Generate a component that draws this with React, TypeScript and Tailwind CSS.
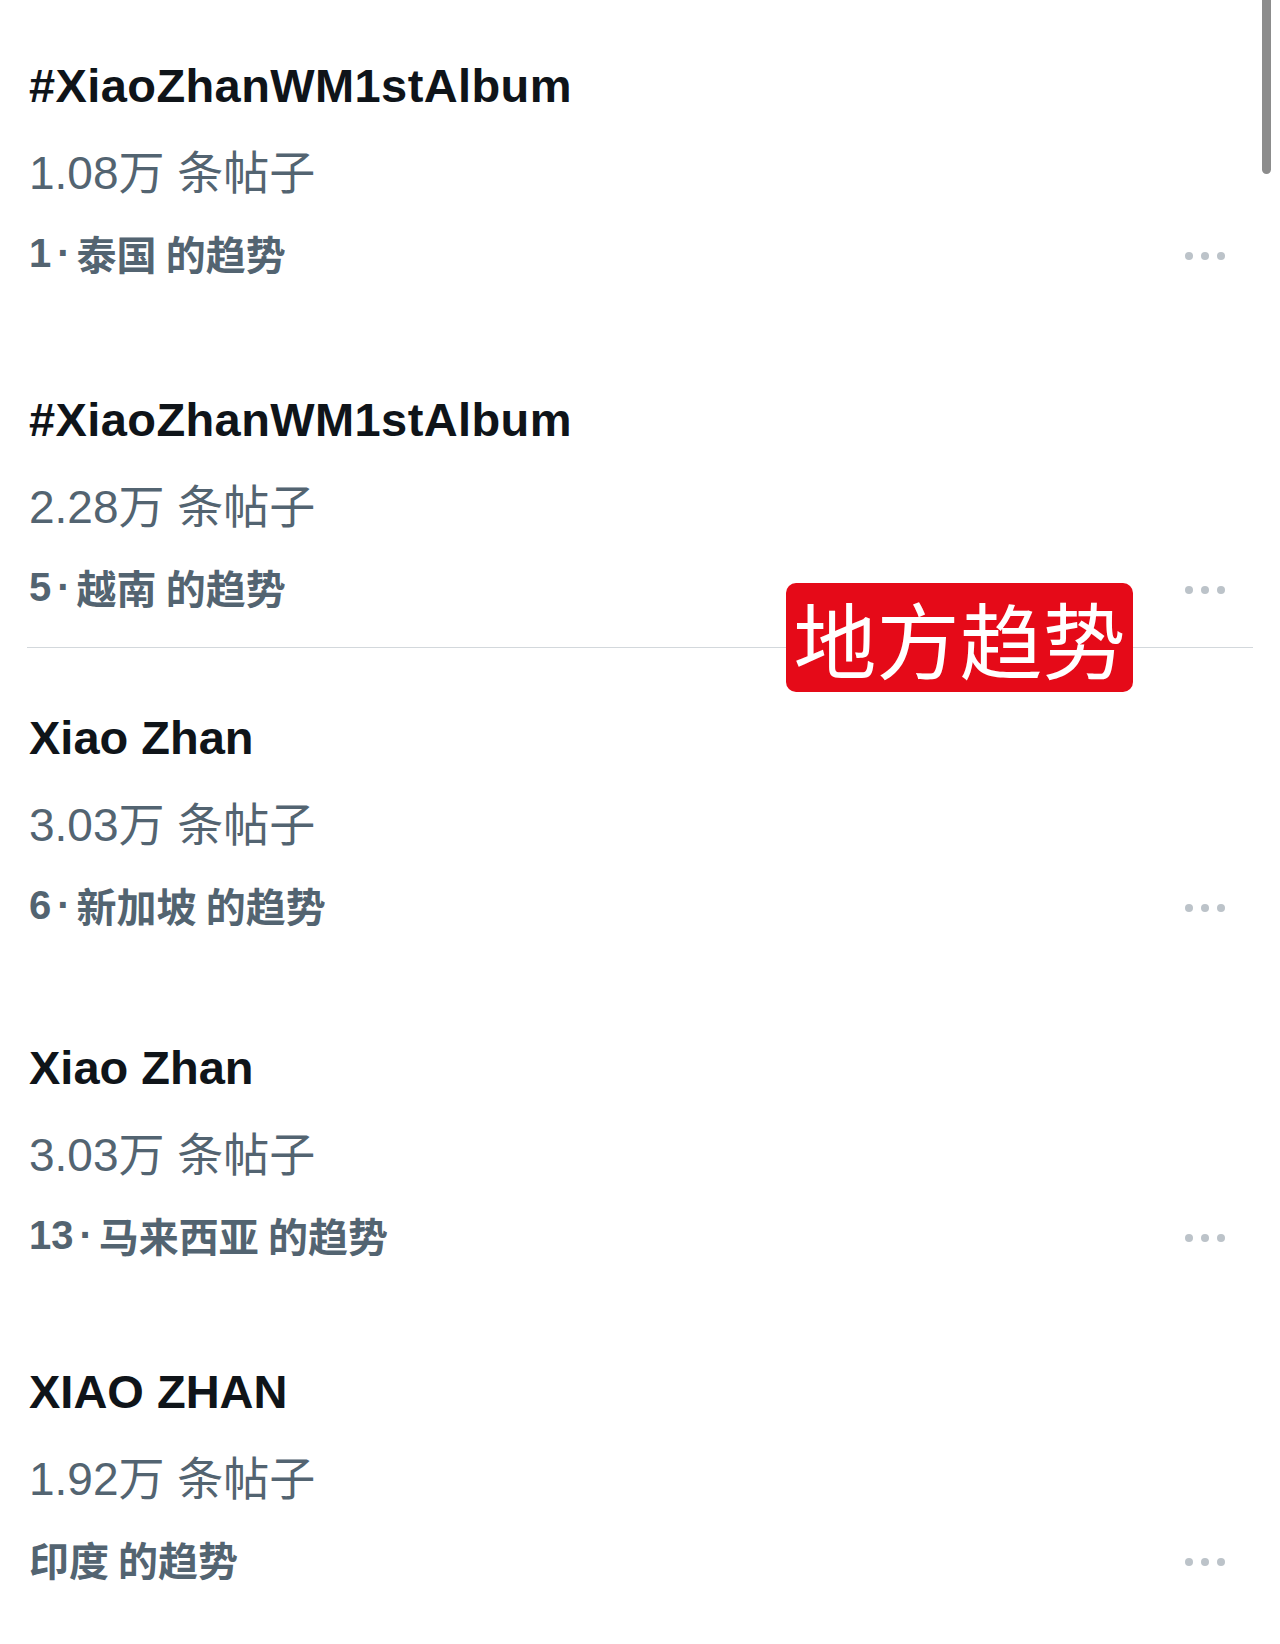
import React from "react";

interface Trend {
  title: string;
  count: string;
  rank?: string;
  place: string;
  gap: string;
}

const trends: Trend[] = [
  { title: "#XiaoZhanWM1stAlbum", count: "1.08万 条帖子", rank: "1", place: "泰国 的趋势", gap: "mt-[44px]" },
  { title: "#XiaoZhanWM1stAlbum", count: "2.28万 条帖子", rank: "5", place: "越南 的趋势", gap: "mt-[84px]" },
  { title: "Xiao Zhan", count: "3.03万 条帖子", rank: "6", place: "新加坡 的趋势", gap: "mt-[48px]" },
  { title: "Xiao Zhan", count: "3.03万 条帖子", rank: "13", place: "马来西亚 的趋势", gap: "mt-[80px]" },
  { title: "XIAO ZHAN", count: "1.92万 条帖子", place: "印度 的趋势", gap: "mt-[74px]" },
];

function MoreDots() {
  return (
    <div className="mt-[5px] flex items-center gap-[8px]">
      <span className="h-[8px] w-[8px] rounded-full bg-[#bcc3c9]" />
      <span className="h-[8px] w-[8px] rounded-full bg-[#bcc3c9]" />
      <span className="h-[8px] w-[8px] rounded-full bg-[#bcc3c9]" />
    </div>
  );
}

function TrendItem({ trend }: { trend: Trend }) {
  const isTag = trend.title.startsWith("#");
  return (
    <div className={`${trend.gap} pl-[29px] pr-[55px]`}>
      <div
        className={`h-[84px] leading-[84px] text-[47px] font-bold text-[#0f1419] font-['Liberation_Sans','Noto_Sans_CJK_SC',sans-serif] whitespace-nowrap ${
          isTag ? "tracking-[0.4px]" : ""
        }`}
      >
        {trend.title}
      </div>
      <div className="h-[84px] pt-[6px] leading-[78px] text-[46px] font-normal text-[#536471] font-['Liberation_Sans','Noto_Sans_CJK_SC',sans-serif] whitespace-nowrap">
        {trend.count}
      </div>
      <div className="flex h-[82px] items-center justify-between">
        <span className="flex items-center text-[40px] font-bold leading-[82px] text-[#536471] whitespace-nowrap">
          {trend.rank && (
            <span className="font-['Liberation_Sans',sans-serif]">
              {trend.rank}
              <span className="mx-[6px]">·</span>
            </span>
          )}
          <span className="font-['Noto_Sans_CJK_SC',sans-serif]">{trend.place}</span>
        </span>
        <MoreDots />
      </div>
    </div>
  );
}

export default function App() {
  return (
    <div className="relative h-[1644px] w-[1280px] overflow-hidden bg-white">
      <TrendItem trend={trends[0]} />
      <TrendItem trend={trends[1]} />
      <div className="ml-[27px] mr-[27px] mt-[19px] h-px bg-[#d3d8dc]" />
      <TrendItem trend={trends[2]} />
      <TrendItem trend={trends[3]} />
      <TrendItem trend={trends[4]} />

      {/* red label pasted over the divider */}
      <div className="absolute left-[786px] top-[583px] flex h-[109px] w-[347px] items-center justify-center rounded-[10px] bg-[#e50a18]">
        <span className="text-[83px] font-normal leading-none text-white font-['Noto_Sans_CJK_SC',sans-serif]">
          地方趋势
        </span>
      </div>

      {/* scroll indicator */}
      <div className="absolute right-[9px] top-0 h-[174px] w-[9px] rounded-b-full bg-[#8c8c8c]" />
    </div>
  );
}
